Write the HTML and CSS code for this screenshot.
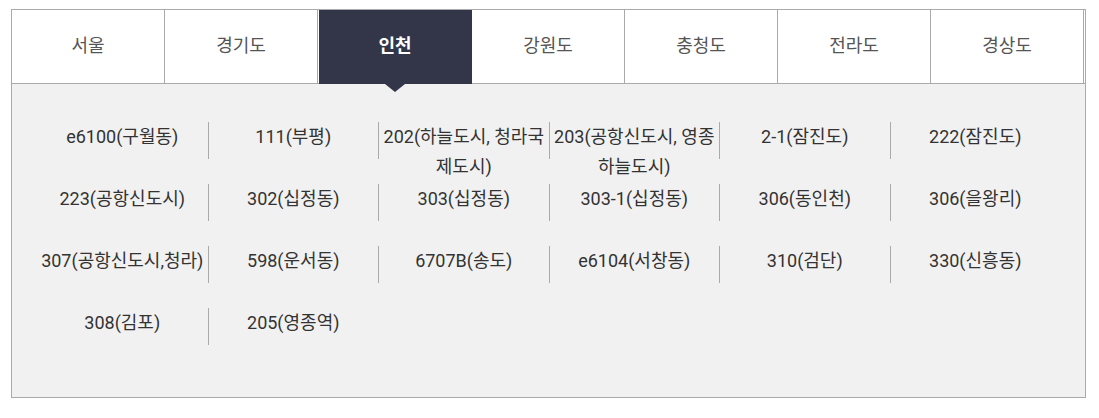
FILE: index.html
```html
<!DOCTYPE html>
<html lang="ko">
  <head>
    <meta charset="UTF-8" />
    <meta name="viewport" content="width=device-width, initial-scale=1.0" />
    <title>지역별 노선</title>
    <link rel="stylesheet" href="styles.css">
  </head>
  <body>
    <div class="route-box">
      <ul class="area-tabs">
        <li>서울</li>
        <li>경기도</li>
        <li class="active">인천</li>
        <li>강원도</li>
        <li>충청도</li>
        <li>전라도</li>
        <li>경상도</li>
      </ul>

      <div class="route-panel">
        <ul class="route-list">
          <li>e6100(구월동)</li>
          <li>111(부평)</li>
          <li>202(하늘도시, 청라국제도시)</li>
          <li>203(공항신도시, 영종하늘도시)</li>
          <li>2-1(잠진도)</li>
          <li>222(잠진도)</li>
          <li>223(공항신도시)</li>
          <li>302(십정동)</li>
          <li>303(십정동)</li>
          <li>303-1(십정동)</li>
          <li>306(동인천)</li>
          <li>306(을왕리)</li>
          <li>307(공항신도시,청라)</li>
          <li>598(운서동)</li>
          <li>6707B(송도)</li>
          <li>e6104(서창동)</li>
          <li>310(검단)</li>
          <li>330(신흥동)</li>
          <li>308(김포)</li>
          <li>205(영종역)</li>
        </ul>
      </div>
    </div>
  </body>
</html>
```

FILE: styles.css
```css
body {
  margin: 0;
  padding: 9px 0 0 11px;
  font-family: Roboto, "Noto Sans CJK KR", sans-serif;
  color: #333;
}

ul {
  margin: 0;
  padding: 0;
  list-style: none;
}

.route-box {
  width: 1073px;
  border: 1px solid #aaa;
}

.area-tabs {
  display: flex;
  align-items: flex-start;
  padding-right: 1px;
  border-bottom: 1px solid #aaa;
  background: #fff;
}

.area-tabs li {
  position: relative;
  flex: 1;
  height: 73px;
  line-height: 72px;
  text-align: center;
  font-size: 18px;
  color: #555;
  border-right: 1px solid #aaa;
  cursor: pointer;
}

.area-tabs li.active {
  height: 74px;
  margin-bottom: -1px;
  margin-left: 1px;
  background: #333548;
  border-right-color: #333548;
  color: #fff;
  font-weight: 700;
}

/* little arrow under the selected tab */
.area-tabs li.active::after {
  content: "";
  position: absolute;
  top: 100%;
  left: 50%;
  margin-left: -10px;
  border-top: 8px solid #333548;
  border-left: 10px solid transparent;
  border-right: 10px solid transparent;
  z-index: 1;
}

.route-panel {
  padding: 38px 25px 52px;
  background: #f1f1f1;
}

.route-list {
  display: grid;
  grid-template-columns: repeat(6, 1fr);
  grid-auto-rows: 37px;
  row-gap: 25px;
}

.route-list li {
  line-height: 30px;
  font-size: 18px;
  text-align: center;
  border-left: 1px solid #aaa;
}

.route-list li:nth-child(6n + 1) {
  border-left: none;
}
```
